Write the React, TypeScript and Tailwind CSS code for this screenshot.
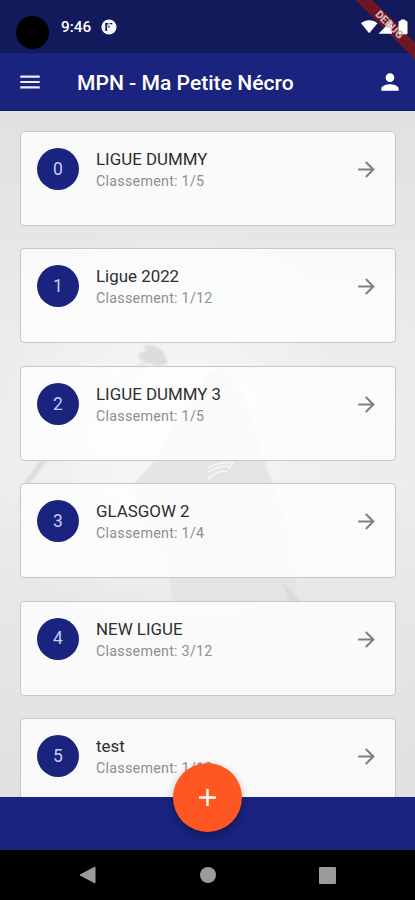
import { MdAdd, MdArrowForward, MdMenu, MdPerson } from 'react-icons/md';

interface League {
  name: string;
  rank: string;
}

const LEAGUES: League[] = [
  { name: 'LIGUE DUMMY',   rank: '1/5' },
  { name: 'Ligue 2022',    rank: '1/12' },
  { name: 'LIGUE DUMMY 3', rank: '1/5' },
  { name: 'GLASGOW 2',     rank: '1/4' },
  { name: 'NEW LIGUE',     rank: '3/12' },
  { name: 'test',          rank: '1/12' },
];

function StatusBar() {
  return (
    <div className="relative h-[53px] shrink-0 bg-[#131a5c] flex items-start">
      <div className="ml-4 mt-[16px] w-[33px] h-[33px] rounded-full bg-black" />
      <span className="ml-[12px] mt-[18px] text-[15.3px] leading-[19px] font-medium text-white">9:46</span>
      <svg className="ml-[10px] mt-[19px]" width="16" height="16" viewBox="0 0 16 16">
        <circle cx="8" cy="8" r="7.6" fill="#f4f4fb" />
        <path d="M5.200 12V4.600" fill="none" stroke="#131a5c" strokeWidth="1.8" />
        <path d="M4.300 3.900h3.200v1.500H4.300zM8.700 3.900h2.600v1.300H8.700zM7.300 6.800h1.300v1.600H7.300z" fill="#131a5c" />
      </svg>

      {/* debug ribbon, the icons sit over the band and the label over the icons */}
      <div className="absolute top-0 right-0 w-[65px] h-[62px] overflow-hidden">
        <div className="absolute top-[18.500px] -right-[39px] w-[130px] h-[12px] rotate-45 bg-[#6d1722]" />
        <svg className="absolute top-[19px] right-[6px]" width="49" height="16" viewBox="0 0 49 16">
          <path d="M1 4.200C5.500.2 13 .2 17.500 4.200L9.200 14.200z" fill="#fff" />
          <path d="M32 1v13.800H18.500z" fill="#fff" />
          <path d="M39 2.500h2V1h4v1.500h2v12.300h-8z" fill="#fff" stroke="#fff" strokeLinejoin="round" />
        </svg>
        <div className="absolute top-[18.500px] -right-[39px] w-[130px] h-[12px] rotate-45 flex items-center justify-center">
          <span className="text-[10.800px] leading-none font-black text-[#cdb3b9]">DEBUG</span>
        </div>
      </div>
    </div>
  );
}

function Backdrop() {
  return (
    <svg className="absolute inset-0" width="415" height="686" viewBox="0 111 415 686">
      <defs>
        <linearGradient id="sky" x1="0" y1="0" x2="0" y2="1">
          <stop offset="0" stopColor="#e1e1e1" />
          <stop offset="0.15" stopColor="#e4e5e6" />
          <stop offset="0.32" stopColor="#e9ebed" />
          <stop offset="0.55" stopColor="#ebedee" />
          <stop offset="0.75" stopColor="#e5e6e6" />
          <stop offset="1" stopColor="#e0e0e0" />
        </linearGradient>
        <radialGradient id="glow">
          <stop offset="0" stopColor="#f6f8f9" />
          <stop offset="1" stopColor="#f6f8f9" stopOpacity="0" />
        </radialGradient>
        <filter id="soft">
          <feGaussianBlur stdDeviation="1.2" />
        </filter>
      </defs>
      <rect y="111" width="415" height="686" fill="url(#sky)" />
      <ellipse cx="175" cy="430" rx="190" ry="215" fill="url(#glow)" />
      <g filter="url(#soft)">
        {/* scythe */}
        <path d="M17 520C15 500 27 478 42 459C75 418 110 382 149 358L151 362C115 388 78 430 47 462C30 482 19 500 17 520z" fill="#e6e7e7" />
        <path d="M23 485L40 460L47 460L28 484z" fill="#dcdddd" />
        <path d="M139 353L147 351L143 346L152 345L163 351L168 363L158 367L139 359z" fill="#dcdddd" />
        {/* hooded figure */}
        <path d="M220 367C200 377 178 412 157 458L134 484L138 520L168 560L172 604L300 604L284 520L272 482L263 458C252 415 240 380 220 367z" fill="#e3e4e4" />
        <path d="M280 578L302 605L290 600z" fill="#d8d9d9" />
      </g>
      <path d="M208 468Q220 461 233 463L229 469M207 473Q219 464 231 467M208 479Q219 469 227 472" fill="none" stroke="#f3f4f4" strokeWidth="2" />
    </svg>
  );
}

function LeagueCard({ league, index }: { league: League; index: number }) {
  return (
    <div className="h-[95px] shrink-0 flex items-start rounded-[4px] border border-[#c6c7c7] bg-white/80 pl-[16px] pr-[16px] pt-4">
      <div className="w-[42px] h-[42px] shrink-0 rounded-full bg-[#1a237e] flex items-center justify-center text-[17.5px] text-[#c5cdf5]">
        {index}
      </div>
      <div className="ml-[17px] flex-1">
        <div className="text-[16.9px] leading-[22px] text-[#2f2f2f]">{league.name}</div>
        <div className="text-[14.3px] leading-[22px] tracking-[0.25px] text-[#8f8f8f]">Classement: {league.rank}</div>
      </div>
      <MdArrowForward className="mt-[9px] text-[#808080]" size={25} />
    </div>
  );
}

export default function App() {
  return (
    <div className="w-[415px] h-[900px] flex flex-col overflow-hidden bg-black font-['Roboto',sans-serif]">
      {/* kept above the app bar so the ribbon can spill onto it */}
      <div className="relative z-10 shrink-0">
        <StatusBar />
      </div>

      <header className="h-[58px] shrink-0 bg-[#1a237e] border-b border-[#141b6d] flex items-center px-[17px] text-white">
        <MdMenu size={26} className="mt-[1px] text-[#ececf6]" />
        <h1 className="mt-[2px] ml-[34px] flex-1 text-[21.1px] font-medium">MPN - Ma Petite Nécro</h1>
        <MdPerson size={26} className="mt-[1px] -mr-[5px]" />
      </header>

      <main className="relative flex-1 overflow-hidden">
        <Backdrop />
        <div className="relative flex flex-col gap-[22.4px] pt-5 pl-[20px] pr-[19px]">
          {LEAGUES.map((league, i) => (
            <LeagueCard key={i} league={league} index={i} />
          ))}
        </div>
      </main>

      <footer className="relative h-[53px] shrink-0 bg-[#1a237e] flex justify-center">
        <button className="absolute -top-[34.5px] w-[69px] h-[69px] rounded-full bg-[#ff5722] text-white flex items-center justify-center shadow-[0_4px_8px_rgba(0,0,0,0.3)]">
          <MdAdd size={29} />
        </button>
      </footer>

      {/* system navigation */}
      <nav className="h-[50px] shrink-0 bg-black flex items-center justify-between pl-[79px] pr-[79px] text-[#9b9b9b]">
        <svg width="17" height="18" viewBox="0 0 17 18">
          <path d="M16 1v16L1 9z" fill="currentColor" stroke="currentColor" strokeLinejoin="round" />
        </svg>
        <div className="w-[16px] h-[16px] rounded-full bg-[#9b9b9b]" />
        <div className="w-[17px] h-[17px] rounded-[1px] bg-[#9b9b9b]" />
      </nav>
    </div>
  );
}
